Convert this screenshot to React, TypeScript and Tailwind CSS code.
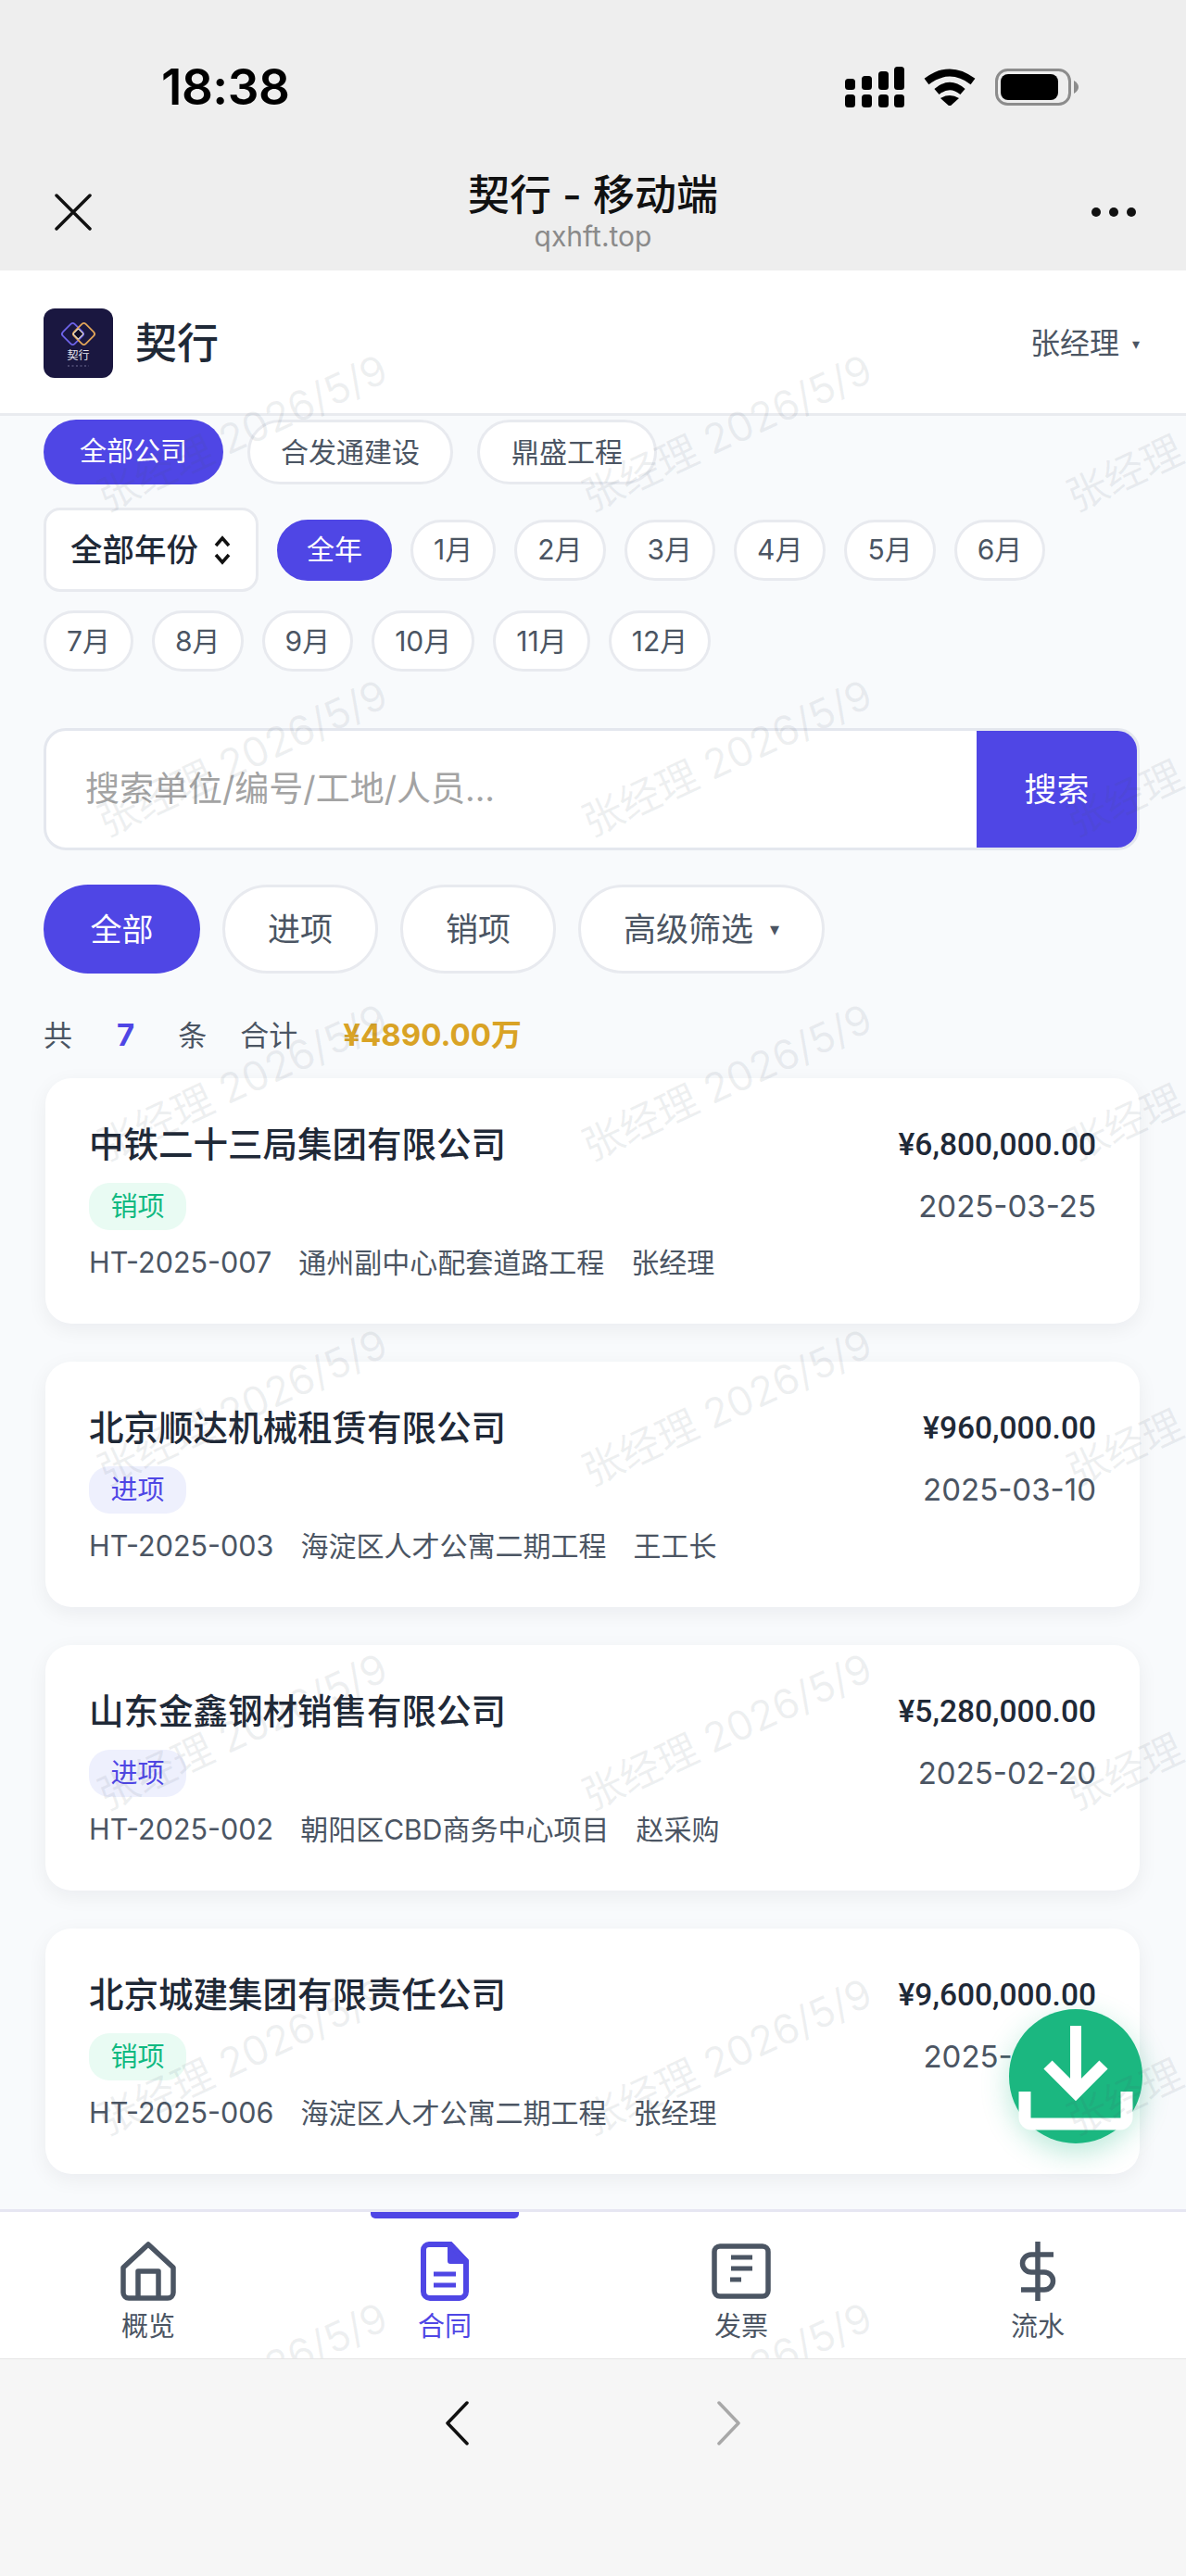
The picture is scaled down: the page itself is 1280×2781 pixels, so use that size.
const months = ["1月", "2月", "3月", "4月", "5月", "6月", "7月", "8月", "9月", "10月", "11月", "12月"];

const contracts = [
  { name: "中铁二十三局集团有限公司", amount: "¥6,800,000.00", date: "2025-03-25", type: "销项", code: "HT-2025-007", site: "通州副中心配套道路工程", person: "张经理" },
  { name: "北京顺达机械租赁有限公司", amount: "¥960,000.00", date: "2025-03-10", type: "进项", code: "HT-2025-003", site: "海淀区人才公寓二期工程", person: "王工长" },
  { name: "山东金鑫钢材销售有限公司", amount: "¥5,280,000.00", date: "2025-02-20", type: "进项", code: "HT-2025-002", site: "朝阳区CBD商务中心项目", person: "赵采购" },
  { name: "北京城建集团有限责任公司", amount: "¥9,600,000.00", date: "2025-03-18", type: "销项", code: "HT-2025-006", site: "海淀区人才公寓二期工程", person: "张经理" },
];

const Chip = ({ label, active }: { label: string; active?: boolean }) => (
  <div
    className={
      active
        ? "h-[66px] px-[30px] flex items-center rounded-full bg-[#4f46e5] text-white text-[30px] border-2 border-[#4f46e5]"
        : "h-[66px] px-[22px] flex items-center rounded-full bg-white text-[#4b5563] text-[30px] border-[3px] border-[#e8eaef]"
    }
  >
    {label}
  </div>
);

const FilterPill = ({ label, active, caret }: { label: string; active?: boolean; caret?: boolean }) => (
  <div
    className={
      active
        ? "h-[96px] w-[169px] flex items-center justify-center rounded-full bg-[#4f46e5] text-white text-[34px]"
        : "h-[96px] px-[46px] min-w-[168px] flex items-center justify-center gap-[18px] rounded-full bg-white text-[#4b5563] text-[35px] border-[3px] border-[#e8eaef]"
    }
  >
    {label}
    {caret && <span className="text-[20px]">▾</span>}
  </div>
);

const ContractCard = ({ c }: { c: (typeof contracts)[number] }) => (
  <div className="h-[265px] shrink-0 rounded-[28px] bg-white pl-[47px] pr-[47px] pt-[50px] shadow-[0_6px_22px_rgba(15,23,42,0.06)]">
    <div className="flex items-center justify-between h-[44px]">
      <div className="text-[37.5px] font-medium text-[#1f2937]">{c.name}</div>
      <div className="text-[33.5px] font-medium text-[#1f2937] font-['Roboto','Inter',sans-serif]">{c.amount}</div>
    </div>
    <div className="flex items-center justify-between mt-[19px] h-[51px]">
      <div
        className={
          c.type === "销项"
            ? "h-[51px] w-[105px] flex items-center justify-center rounded-[22px] bg-[#e9fbf3] text-[#10b981] text-[29px]"
            : "h-[51px] w-[105px] flex items-center justify-center rounded-[22px] bg-[#eef0fd] text-[#4f46e5] text-[29px]"
        }
      >
        {c.type}
      </div>
      <div className="text-[33px] text-[#4b5563]">{c.date}</div>
    </div>
    <div className="flex items-center gap-[29px] mt-[15px] text-[30px] text-[#4b5563] h-[40px]">
      <span className="text-[30.5px]">{c.code}</span>
      <span>{c.site}</span>
      <span>{c.person}</span>
    </div>
  </div>
);

const SignalIcon = () => (
  <svg width="64" height="44" viewBox="0 0 64 44" fill="#000">
    <rect x="0" y="13" width="11" height="12" rx="3.5" />
    <rect x="18" y="10" width="11" height="15" rx="3.5" />
    <rect x="36" y="5" width="11" height="20" rx="3.5" />
    <rect x="53" y="0" width="11" height="25" rx="3.5" />
    <rect x="0" y="30" width="11" height="14" rx="3.5" />
    <rect x="18" y="30" width="11" height="14" rx="3.5" />
    <rect x="36" y="30" width="11" height="14" rx="3.5" />
    <rect x="53" y="30" width="11" height="14" rx="3.5" />
  </svg>
);

const WifiIcon = () => (
  <svg width="56" height="40" viewBox="0 0 56 40" fill="none">
    <path d="M3 14 Q28 -5 53 14" stroke="#000" strokeWidth="8" strokeLinejoin="round" />
    <path d="M14 25 Q28 13 42 25" stroke="#000" strokeWidth="8" />
    <path d="M18 32 Q28 26 38 32 L28 41 Z" fill="#000" />
  </svg>
);

const BatteryIcon = () => (
  <svg width="90" height="40" viewBox="0 0 90 40" fill="none">
    <rect x="1.5" y="1.5" width="79" height="37" rx="12" stroke="#8c8c8c" strokeWidth="3" />
    <rect x="6" y="6" width="62" height="28" rx="8" fill="#000" />
    <path d="M85 13 Q90 16 90 20 Q90 24 85 27 Z" fill="#8c8c8c" />
  </svg>
);

const LogoMark = () => (
  <div className="relative w-[75px] h-[75px] rounded-[12px] bg-[#1a1740] overflow-hidden">
    <svg className="absolute inset-0" width="75" height="75" viewBox="0 0 75 75" fill="none">
      <rect x="22.5" y="18.5" width="18" height="18" rx="3" transform="rotate(45 31.5 27.5)" stroke="#6d63e8" strokeWidth="1.8" />
      <rect x="34.5" y="18.5" width="18" height="18" rx="3" transform="rotate(45 43.5 27.5)" stroke="#e0a458" strokeWidth="1.8" />
      <rect x="33.5" y="23.5" width="8" height="8" rx="1" transform="rotate(45 37.5 27.5)" fill="#0e0c26" stroke="#f5e9d4" strokeWidth="1" />
      <path d="M26 62 H49" stroke="#55537a" strokeWidth="1.5" strokeDasharray="2 2.5" />
    </svg>
    <div className="absolute left-0 right-0 top-[44px] text-center text-[12px] leading-[14px] text-[#e5e5ee]">契行</div>
  </div>
);

const HomeIcon = () => (
  <svg width="60" height="64" viewBox="0 0 60 64" fill="none" stroke="#4b5563" strokeWidth="5.5" strokeLinejoin="round">
    <path d="M30 3 L57 28 V55 a6 6 0 0 1 -6 6 H9 a6 6 0 0 1 -6 -6 V28 Z" />
    <path d="M19 61 V32 H41 V61" />
  </svg>
);

const DocIcon = () => (
  <svg width="52" height="64" viewBox="0 0 52 64" fill="none" stroke="#4f46e5" strokeWidth="6" strokeLinejoin="round">
    <path d="M9 3 H32 L49 21 V54 a7 7 0 0 1 -7 7 H10 a7 7 0 0 1 -7 -7 V9 a6 6 0 0 1 6 -6 Z" />
    <path d="M32 3 V21 H49 Z" fill="#4f46e5" />
    <path d="M14 35 H38 M14 47 H38" strokeWidth="5" />
  </svg>
);

const InvoiceIcon = () => (
  <svg width="64" height="60" viewBox="0 0 64 60" fill="none" stroke="#4b5563" strokeWidth="5.5">
    <rect x="3" y="3" width="58" height="54" rx="6" />
    <path d="M21 15 H44 M21 27 H44 M20 39 H32" strokeWidth="5" />
  </svg>
);

const DollarIcon = () => (
  <svg width="40" height="64" viewBox="0 0 40 64" fill="none" stroke="#4b5563" strokeWidth="5.5">
    <path d="M20 0 V64" />
    <path d="M37 14 H13 a9.5 9.5 0 0 0 0 19 H27 a9.5 9.5 0 0 1 0 19 H2" />
  </svg>
);

const NavItem = ({ label, icon, active }: { label: string; icon: React.ReactNode; active?: boolean }) => (
  <div className="relative flex-1 flex flex-col items-center pt-[31px]">
    {active && <div className="absolute top-0 w-[160px] h-[7px] rounded-b-[5px] bg-[#4f46e5]" />}
    <div className="h-[66px] flex items-center justify-center">{icon}</div>
    <div className={active ? "mt-[9px] text-[29px] leading-[36px] text-[#4f46e5]" : "mt-[9px] text-[29px] leading-[36px] text-[#4b5563]"}>
      {label}
    </div>
  </div>
);

export default function App() {
  return (
    <div className="w-[1280px] h-[2781px] flex flex-col overflow-hidden bg-[#f6f6f6] font-['Inter','Noto_Sans_CJK_SC',sans-serif]">
      {/* browser chrome, top */}
      <div className="h-[292px] shrink-0 bg-[#eeeeee]">
        <div className="flex items-center justify-between h-[44px] mt-[72px] pl-[174px] pr-[116px] pt-0">
          <div className="text-[53px] leading-[44px] font-semibold text-black tracking-[-0.5px]">18:38</div>
          <div className="flex items-center gap-[21px]">
            <SignalIcon />
            <WifiIcon />
            <BatteryIcon />
          </div>
        </div>
        <div className="grid grid-cols-[1fr_auto_1fr] items-center px-[54px] mt-[69px]">
          <svg className="ml-[5px]" width="40" height="40" viewBox="0 0 40 40" fill="none" stroke="#111" strokeWidth="3.5" strokeLinecap="round">
            <path d="M2 2 L38 38 M38 2 L2 38" />
          </svg>
          <div className="flex flex-col items-center">
            <div className="text-[45px] leading-[52px] font-medium text-[#111]">契行 - 移动端</div>
            <div className="text-[30px] leading-[34px] mt-[1px] text-[#8a8a8a]">qxhft.top</div>
          </div>
          <div className="flex justify-end gap-[9px]">
            <div className="w-[10px] h-[10px] rounded-full bg-[#111]" />
            <div className="w-[10px] h-[10px] rounded-full bg-[#111]" />
            <div className="w-[10px] h-[10px] rounded-full bg-[#111]" />
          </div>
        </div>
      </div>

      {/* app */}
      <div className="relative h-[2254px] shrink-0 flex flex-col bg-[#f8fafc] overflow-hidden">
        <div className="h-[157px] shrink-0 flex items-center justify-between pl-[47px] pr-[50px] pt-[3px] bg-white border-b-[3px] border-[#e9ebef]">
          <div className="flex items-center gap-[24px]">
            <LogoMark />
            <div className="text-[45px] font-medium text-[#1f2937]">契行</div>
          </div>
          <div className="flex items-center gap-[14px] text-[32px] text-[#4b5563]">
            张经理
            <span className="text-[16px]">▾</span>
          </div>
        </div>

        <div className="flex-1 pl-[47px] pr-[50px] pt-[4px]">
          <div className="flex items-center gap-[26px]">
            <div className="h-[70px] w-[194px] flex items-center justify-center rounded-full bg-[#4f46e5] text-white text-[29px]">全部公司</div>
            <div className="h-[70px] w-[222px] flex items-center justify-center rounded-full bg-white text-[#4b5563] text-[30px] border-[3px] border-[#e8eaef]">合发通建设</div>
            <div className="h-[70px] w-[194px] flex items-center justify-center rounded-full bg-white text-[#4b5563] text-[30px] border-[3px] border-[#e8eaef]">鼎盛工程</div>
          </div>

          <div className="flex flex-wrap items-center gap-x-[20px] gap-y-[20px] mt-[25px]">
            <div className="h-[91px] w-[232px] flex items-center justify-center gap-[16px] rounded-[18px] bg-white border-[3px] border-[#e8eaef] text-[34.5px] font-medium text-[#1f2937]">
              全部年份
              <svg width="20" height="34" viewBox="0 0 20 34" fill="none" stroke="#111" strokeWidth="3.5">
                <path d="M3 12 L10 4 L17 12 M3 22 L10 30 L17 22" />
              </svg>
            </div>
            <Chip label="全年" active />
            {months.map((m) => (
              <Chip key={m} label={m} />
            ))}
          </div>

          <div className="h-[132px] mt-[61px] flex rounded-[24px] bg-white border-[3px] border-[#e4e7ee] overflow-hidden">
            <div className="flex-1 flex items-center pl-[42px] text-[37px] text-[#a3a3a3]">搜索单位/编号/工地/人员...</div>
            <div className="w-[173px] flex items-center justify-center bg-[#4f46e5] text-white text-[35px]">搜索</div>
          </div>

          <div className="flex items-center gap-[24px] mt-[37px]">
            <FilterPill label="全部" active />
            <FilterPill label="进项" />
            <FilterPill label="销项" />
            <FilterPill label="高级筛选" caret />
          </div>

          <div className="flex items-center h-[44px] mt-[45px] text-[31px] text-[#4b5563]">
            <span>共</span>
            <span className="ml-[48px] text-[33px] font-bold text-[#4f46e5]">7</span>
            <span className="ml-[47px]">条</span>
            <span className="ml-[36px]">合计</span>
            <span className="ml-[49px] text-[33px] font-bold text-[#d9a325]">¥4890.00万</span>
          </div>

          <div className="flex flex-col gap-[41px] mt-[24px] pl-[2px]">
            {contracts.map((c) => (
              <ContractCard key={c.code} c={c} />
            ))}
          </div>
        </div>

        {/* download button */}
        <div className="absolute left-[1089px] top-[1877px] w-[144px] h-[145px] rounded-full bg-[#1bb780] shadow-[0_10px_30px_rgba(27,183,128,0.3)]">
          <svg width="144" height="145" viewBox="0 0 144 145" fill="none" stroke="#fff" strokeWidth="12">
            <path d="M72 18 V90" />
            <path d="M42 60 L72 90 L102 60" strokeWidth="13" />
            <path d="M17 89 V117 a7 7 0 0 0 7 7 H120 a7 7 0 0 0 7 -7 V89" strokeWidth="13" />
          </svg>
        </div>

        {/* bottom nav */}
        <div className="absolute left-0 right-0 bottom-0 h-[161px] flex bg-white border-t-[3px] border-[#e6e6f2]">
          <NavItem label="概览" icon={<HomeIcon />} />
          <NavItem label="合同" icon={<DocIcon />} active />
          <NavItem label="发票" icon={<InvoiceIcon />} />
          <NavItem label="流水" icon={<DollarIcon />} />
        </div>

        {/* watermark */}
        <div className="absolute inset-0 grid grid-cols-[repeat(3,523px)] auto-rows-[350.5px] pointer-events-none">
          {Array.from({ length: 21 }).map((_, i) => (
            <div key={i} className="flex items-center justify-center whitespace-nowrap">
              <span className="rotate-[-25deg] text-[44px] text-[rgba(71,85,105,0.09)]">张经理 2026/5/9</span>
            </div>
          ))}
        </div>
      </div>

      {/* browser chrome, bottom */}
      <div className="flex-1 flex justify-center gap-[268px] pt-[45px] border-t border-[#e5e5e5]">
        <svg width="26" height="48" viewBox="0 0 26 48" fill="none" stroke="#111" strokeWidth="3.5" strokeLinecap="round" strokeLinejoin="round">
          <path d="M24 2 L3 24 L24 46" />
        </svg>
        <svg width="26" height="48" viewBox="0 0 26 48" fill="none" stroke="#a8a8a8" strokeWidth="3.5" strokeLinecap="round" strokeLinejoin="round">
          <path d="M2 2 L23 24 L2 46" />
        </svg>
      </div>
    </div>
  );
}
